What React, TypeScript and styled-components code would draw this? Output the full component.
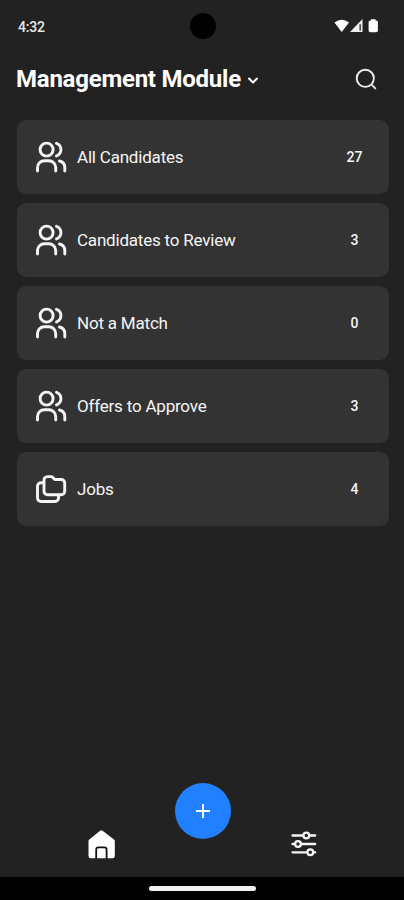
import React from "react";
import styled, { createGlobalStyle } from "styled-components";

const GlobalStyle = createGlobalStyle`
  * { box-sizing: border-box; }
  body { margin: 0; background: #222; }
  button { border: 0; padding: 0; background: none; color: inherit; font: inherit; }
  svg { display: block; flex: none; }
`;

const Screen = styled.div`
  display: flex;
  flex-direction: column;
  width: 404px;
  height: 900px;
  overflow: hidden;
  background: #222;
  color: #f5f5f5;
  font-family: Roboto, sans-serif;
`;

const StatusBar = styled.div`
  display: grid;
  grid-template-columns: 1fr 26px 1fr;
  align-items: center;
  height: 52px;
  padding: 0 24px 0 18px;
`;

const Time = styled.span`
  font-size: 14px;
  font-weight: 500;
  line-height: 18px;
  padding-top: 2px;
  letter-spacing: -0.2px;
  color: #e8e8e8;
`;

const Camera = styled.div`
  width: 26px;
  height: 26px;
  margin-left: 3.5px;
  border-radius: 50%;
  background: #000;
`;

const StatusIcons = styled.div`
  display: flex;
  justify-content: flex-end;
`;

const Header = styled.header`
  display: flex;
  align-items: center;
  justify-content: space-between;
  height: 54px;
  padding: 0 27.5px 0 16px;
`;

const TitleButton = styled.button`
  display: flex;
  align-items: center;
  gap: 6px;
`;

const Title = styled.h1`
  margin: 0;
  font-size: 24px;
  font-weight: 700;
  line-height: 30px;
  letter-spacing: -0.24px;
  white-space: nowrap;
  color: #fff;
`;

const List = styled.main`
  display: flex;
  flex: 1;
  flex-direction: column;
  gap: 9px;
  padding: 14px 15.5px 0 16.5px;
`;

const Card = styled.div`
  display: flex;
  align-items: center;
  height: 74px;
  padding: 0 12px 0 13.5px;
  border-radius: 9px;
  background: #333;
`;

const Label = styled.span`
  flex: 1;
  margin-left: 3px;
  font-size: 17px;
  line-height: 22px;
  letter-spacing: -0.2px;
`;

const Count = styled.span`
  width: 44px;
  font-size: 14px;
  font-weight: 500;
  line-height: 20px;
  text-align: center;
`;

const TabBar = styled.nav`
  display: grid;
  grid-template-columns: 1fr 56px 1fr;
  height: 94px;
`;

const Tab = styled.button<{ $side: "left" | "right" }>`
  display: flex;
  align-self: end;
  justify-self: ${(p) => (p.$side === "left" ? "end" : "start")};
  margin: ${(p) => (p.$side === "left" ? "0 50px 11px 0" : "0 0 11px 60px")};
`;

const AddButton = styled.button`
  display: flex;
  align-items: center;
  justify-content: center;
  width: 56px;
  height: 56px;
  margin-left: 0.5px;
  border-radius: 50%;
  background: #2080ff;
`;

const SystemBar = styled.footer`
  display: flex;
  align-items: center;
  justify-content: center;
  height: 23px;
  background: #000;
`;

const Handle = styled.div`
  width: 107px;
  height: 5px;
  margin-left: 1px;
  border-radius: 3px;
  background: #f2f2f2;
`;

const PeopleIcon = () => (
  <svg width="44" height="44" viewBox="0 0 44 44" fill="none" stroke="#f5f5f5" strokeWidth="2.9" strokeLinecap="round">
    <circle cx="16.6" cy="14.6" r="6.5" />
    <path d="M26.5 8.3a6.7 6.7 0 0 1 0 12.6" />
    <path d="M7.5 36v-3.5a6.8 6.8 0 0 1 6.8-6.8h4.6a6.8 6.8 0 0 1 6.8 6.8V36" />
    <path d="M29.5 26a6.8 6.8 0 0 1 5.3 6.6V36" />
  </svg>
);

const FoldersIcon = () => (
  <svg width="44" height="44" viewBox="0 0 44 44" fill="none" stroke="#f5f5f5" strokeWidth="2.9" strokeLinejoin="round">
    <path d="M14 13.5v10.700a3.500 3.500 0 0 0 3.500 3.500h13.700a3.500 3.500 0 0 0 3.500-3.500V16a3.500 3.500 0 0 0-3.500-3.500h-6.400l-2.400-2.400a1.800 1.800 0 0 0-1.300-.5h-3.600A3.500 3.500 0 0 0 14 13.500Z" />
    <path d="M14 15.800h-3A3.500 3.500 0 0 0 7.500 19.300v11.700A3.500 3.500 0 0 0 11 34.500h14a3.500 3.500 0 0 0 3.500-3.500v-3.200" />
  </svg>
);

const ChevronIcon = () => (
  <svg width="12" height="12" viewBox="0 0 12 12" fill="none" stroke="#fff" strokeWidth="2" strokeLinecap="round" strokeLinejoin="round">
    <path d="m2 5.500 4 4 4-4" />
  </svg>
);

const SearchIcon = () => (
  <svg width="22" height="22" viewBox="0 0 22 22" fill="none" stroke="#eee" strokeWidth="1.900" strokeLinecap="round">
    <circle cx="10.300" cy="10.300" r="8.600" />
    <path d="m16.700 16.700 3.600 3.600" />
  </svg>
);

const SignalIcons = () => (
  <svg width="46" height="16" viewBox="0 0 46 16" fill="#fff">
    <path d="M.5 4.500Q7.700-1 15 4.500L7.700 14Z" />
    <path d="M28.500 1v13H16Z" fill="#eee" />
    <path d="M25.500 6.200h1.300v6.300h-1.300Z" fill="#222" />
    <path d="M37 1.200h4.500v1.200h.7a1.700 1.700 0 0 1 1.700 1.700v8.400a1.700 1.700 0 0 1-1.700 1.700h-5.900A1.700 1.700 0 0 1 34.600 12.500V4.100a1.700 1.700 0 0 1 1.700-1.700H37Z" />
  </svg>
);

const HomeIcon = () => (
  <svg width="44" height="44" viewBox="0 0 44 44">
    <path d="M20.100 8.700a2 2 0 0 1 2.500 0L34 17.400a2 2 0 0 1 .8 1.500v15.200a2.200 2.200 0 0 1-2.200 2.200H10.700a2.200 2.200 0 0 1-2.200-2.200V18.900a2 2 0 0 1 .8-1.500Z" fill="#fff" />
    <path d="M16.200 37v-9.300a2.300 2.300 0 0 1 2.300-2.300h5.800a2.300 2.300 0 0 1 2.300 2.300V37" fill="none" stroke="#111" strokeWidth="1.800" />
  </svg>
);

const SlidersIcon = () => (
  <svg width="28" height="44" viewBox="0 0 28 44" fill="none" stroke="#f5f5f5" strokeWidth="2.300" strokeLinecap="round">
    <path d="M2.500 13.500h10.500m6 0h6.200M2.500 22h2.500m6 0h14.200M2.500 30.300h14.500m6 0h2.200" />
    <circle cx="16.300" cy="13.500" r="2.900" />
    <circle cx="8" cy="22" r="2.900" />
    <circle cx="20.300" cy="30.300" r="2.900" />
  </svg>
);

const PlusIcon = () => (
  <svg width="16" height="16" viewBox="0 0 16 16" stroke="#fff" strokeWidth="2">
    <path d="M8 1v14M1 8h14" />
  </svg>
);

const items = [
  { label: "All Candidates", count: 27, Icon: PeopleIcon },
  { label: "Candidates to Review", count: 3, Icon: PeopleIcon },
  { label: "Not a Match", count: 0, Icon: PeopleIcon },
  { label: "Offers to Approve", count: 3, Icon: PeopleIcon },
  { label: "Jobs", count: 4, Icon: FoldersIcon },
];

export default function App() {
  return (
    <Screen>
      <GlobalStyle />
      <StatusBar>
        <Time>4:32</Time>
        <Camera />
        <StatusIcons><SignalIcons /></StatusIcons>
      </StatusBar>
      <Header>
        <TitleButton>
          <Title>Management Module</Title>
          <ChevronIcon />
        </TitleButton>
        <button aria-label="Search"><SearchIcon /></button>
      </Header>
      <List>
        {items.map(({ label, count, Icon }) => (
          <Card key={label}>
            <Icon />
            <Label>{label}</Label>
            <Count>{count}</Count>
          </Card>
        ))}
      </List>
      <TabBar>
        <Tab $side="left" aria-label="Home"><HomeIcon /></Tab>
        <AddButton aria-label="Add"><PlusIcon /></AddButton>
        <Tab $side="right" aria-label="Settings"><SlidersIcon /></Tab>
      </TabBar>
      <SystemBar><Handle /></SystemBar>
    </Screen>
  );
}
